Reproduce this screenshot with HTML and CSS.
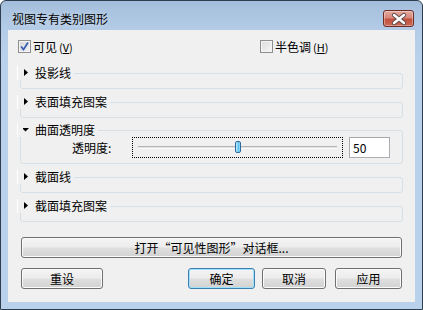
FILE: index.html
```html
<!DOCTYPE html>
<html lang="zh-CN">
<head>
<meta charset="utf-8">
<title>视图专有类别图形</title>
<link rel="stylesheet" href="styles.css">
</head>
<body>
<div class="window">
  <div class="titlebar">
    <span class="title">视图专有类别图形</span>
    <button class="close" aria-label="关闭">
      <svg width="28" height="14" viewBox="0 0 28 14">
        <path d="M9 3 L19 11 M19 3 L9 11" stroke="#5a4a48" stroke-width="4.2" stroke-linecap="round" fill="none"/>
        <path d="M9 3 L19 11 M19 3 L9 11" stroke="#ffffff" stroke-width="2.4" stroke-linecap="round" fill="none"/>
      </svg>
    </button>
  </div>
  <div class="client">
    <div class="checks">
      <label class="check first">
        <span class="box checked">
          <svg width="11" height="11" viewBox="0 0 11 11"><path d="M2 5.5 L4.5 8.5 L9 1.5" stroke="#3a5fb4" stroke-width="1.8" fill="none"/></svg>
        </span>可见<span class="acc">(<u>V</u>)</span>
      </label>
      <label class="check">
        <span class="box"></span>半色调<span class="acc">(<u>H</u>)</span>
      </label>
    </div>

    <fieldset class="group g1">
      <legend><span class="tri"><svg width="11" height="8" viewBox="0 0 11 8"><path d="M1 0 L5 3.5 L1 7 Z" fill="#000"/></svg></span>投影线</legend>
      <div class="body collapsed"></div>
    </fieldset>

    <fieldset class="group g2">
      <legend><span class="tri"><svg width="11" height="8" viewBox="0 0 11 8"><path d="M1 0 L5 3.5 L1 7 Z" fill="#000"/></svg></span>表面填充图案</legend>
      <div class="body collapsed"></div>
    </fieldset>

    <fieldset class="group g3">
      <legend><span class="tri"><svg width="11" height="8" viewBox="0 0 11 8"><path d="M-1 2 L6 2 L2.5 5.5 Z" fill="#000"/></svg></span>曲面透明度</legend>
      <div class="body open">
        <span class="field-label">透明度:</span>
        <div class="slider">
          <div class="track"></div>
          <div class="thumb"></div>
        </div>
        <div class="textbox">50</div>
      </div>
    </fieldset>

    <fieldset class="group g4">
      <legend><span class="tri"><svg width="11" height="8" viewBox="0 0 11 8"><path d="M1 0 L5 3.5 L1 7 Z" fill="#000"/></svg></span>截面线</legend>
      <div class="body collapsed"></div>
    </fieldset>

    <fieldset class="group g5">
      <legend><span class="tri"><svg width="11" height="8" viewBox="0 0 11 8"><path d="M1 0 L5 3.5 L1 7 Z" fill="#000"/></svg></span>截面填充图案</legend>
      <div class="body collapsed"></div>
    </fieldset>

    <button class="btn wide">打开“可见性图形”对话框...</button>

    <div class="actions">
      <button class="btn reset">重设</button>
      <button class="btn ok default">确定</button>
      <button class="btn cancel">取消</button>
      <button class="btn apply">应用</button>
    </div>
  </div>
</div>
</body>
</html>
```

FILE: styles.css
```css
* { box-sizing: border-box; }

html, body {
  margin: 0;
  background: #ffffff;
}

body {
  font: 12px/14px "Noto Sans CJK SC", "Noto Sans", sans-serif;
  color: #000;
}

.window {
  width: 423px;
  height: 310px;
  border: 1px solid #2f3e4e;
  border-radius: 6px 6px 0 0;
  background: linear-gradient(#a3bedc 0, #b4cce7 30px, #b9d1ea 60px, #b9d1ea 100%);
  padding: 0 7px 7px;
  display: flex;
  flex-direction: column;
}

.titlebar {
  height: 29px;
  display: flex;
  align-items: flex-start;
  justify-content: space-between;
  padding: 0 0 0 4px;
}

.title {
  margin-top: 11px;
  font-size: 12px;
  line-height: 14px;
  text-shadow: 0 0 6px rgba(255,255,255,0.6);
}

.close {
  margin-top: 9px;
  margin-right: 1px;
  width: 31px;
  height: 17px;
  padding: 0;
  border: 1px solid #6f2c25;
  border-radius: 3px;
  background: linear-gradient(#e5a99e 0, #d7887a 45%, #c3503f 55%, #c86a55 100%);
  box-shadow: inset 0 0 0 1px rgba(255,255,255,0.35);
  display: flex;
  align-items: center;
  justify-content: center;
}

.client {
  flex: 1;
  background: #f0f0f0;
  display: flex;
  flex-direction: column;
}

.checks {
  display: flex;
  padding: 10px 0 0 10px;
  height: 33px;
  flex: none;
}

.check {
  display: flex;
  align-items: center;
  height: 13px;
}

.check.first {
  width: 242px;
}

.box {
  width: 13px;
  height: 13px;
  border: 1px solid #8f8f8f;
  background: linear-gradient(135deg, #dcdcdc, #f6f6f6);
  box-shadow: inset 0 0 0 1px #f4f4f4;
  margin-right: 2px;
  display: flex;
  align-items: center;
  justify-content: center;
}

.box.checked {
  background: linear-gradient(135deg, #d6d6d6, #f2f2f2);
}

.acc {
  font-size: 11px;
  margin-left: 2px;
}

.group {
  margin: 0 12px;
  padding: 0;
  border: 1px solid #d5dfe5;
  border-radius: 3px;
  min-width: 0;
  flex: none;
}

.group legend {
  margin-left: -4px;
  padding: 0 3px 0 4px;
  display: flex;
  align-items: center;
  height: 14px;
  line-height: 14px;
  background: #f0f0f0;
  border-left: 1px solid #ffffff;
}

.tri {
  display: inline-flex;
  width: 12px;
  height: 8px;
  margin-left: 1px;
}

.g1 { margin-top: 3px; }
.g2 { margin-top: 6px; }
.g3 { margin-top: 5px; }
.g4 { margin-top: 6px; }
.g5 { margin-top: 6px; }

.body.collapsed {
  height: 8px;
}

.body.open {
  height: 26px;
  display: flex;
  align-items: flex-start;
  padding-top: 0;
}

.field-label {
  margin-left: 51px;
  width: 60px;
  margin-top: 4px;
}

.slider {
  position: relative;
  width: 211px;
  height: 21px;
  border: 1px dotted #000;
  display: flex;
  align-items: center;
  padding: 0 5px;
}

.track {
  flex: 1;
  height: 3px;
  border-top: 1px solid #b4b4b4;
  background: #e2e2e2;
  border-bottom: 1px solid #fbfbfb;
}

.thumb {
  position: absolute;
  left: 102px;
  top: 3px;
  width: 6px;
  height: 12px;
  border: 1px solid #2f6aa0;
  border-radius: 2px;
  background: linear-gradient(90deg, #c8effd, #5cc3ee 60%, #9fdcf5);
}

.textbox {
  margin-left: 6px;
  width: 41px;
  height: 21px;
  border: 1px solid #abadb3;
  border-top-color: #a3a5ab;
  background: #fff;
  padding: 3px 0 0 3px;
}

.btn {
  height: 21px;
  flex: none;
  padding: 0;
  font: inherit;
  color: #000;
  border: 1px solid #707070;
  border-radius: 3px;
  background: linear-gradient(#f4f4f4 0, #ececec 48%, #dfdfdf 52%, #d2d2d2 100%);
  box-shadow: inset 0 0 0 1px #fbfbfb;
}

.btn.wide {
  margin: 15px 13px 0;
}

.actions {
  display: flex;
  margin: 10px 13px 0;
}

.reset { width: 82px; }
.ok { width: 67px; margin-left: 85px; }
.cancel { width: 64px; margin-left: 7px; }
.apply { width: 67px; margin-left: 9px; }

.btn.default {
  border-color: #3c7fb1;
  box-shadow: inset 0 0 0 1px #9fe0fb;
}
```
